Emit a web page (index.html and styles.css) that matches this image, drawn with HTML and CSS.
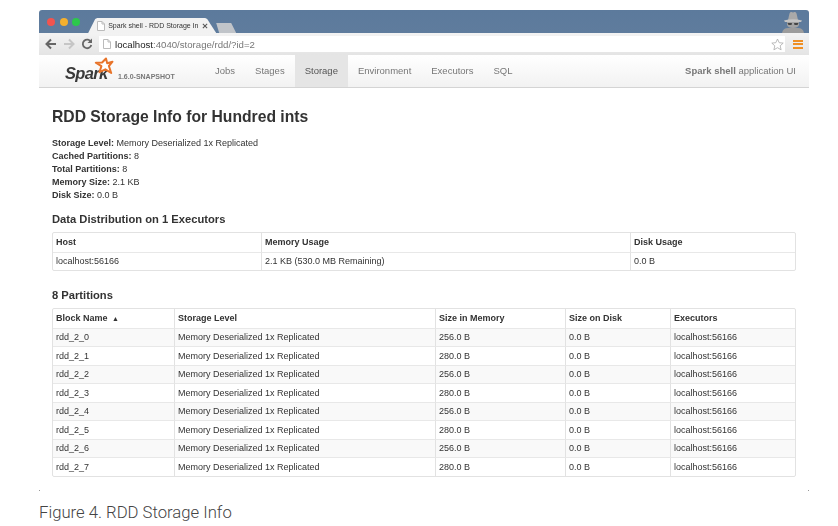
FILE: index.html
```html
<!DOCTYPE html>
<html lang="en">

<head>
  <meta charset="UTF-8">
  <title>RDD Storage Info</title>
  <link rel="stylesheet" href="styles.css">
</head>

<body>
  <div class="window">
    <div class="tabstrip">
      <div class="lights">
        <span class="light red"></span>
        <span class="light yellow"></span>
        <span class="light green"></span>
      </div>
      <div class="tab">
        <svg class="page-icon" width="8" height="10" viewBox="0 0 8 10"><path d="M.5.5h4.500l2.500 2.500v6.500h-7z" fill="#fff" stroke="#bbb"/><path d="M5 .5v2.500h2.500" fill="none" stroke="#bbb"/></svg>
        <span class="tab-title">Spark shell - RDD Storage In</span>
        <svg class="tab-close" width="6" height="6" viewBox="0 0 7 7"><path d="M1 1l5 5M6 1l-5 5" fill="none" stroke="#555" stroke-width="1.200"/></svg>
      </div>
      <div class="tab-new"></div>
      <svg class="spy" width="24" height="22" viewBox="0 0 24 22">
        <path d="M7 9l1.500-6.500q.5-2 2-1.500l1.500.5 1.500-.5q1.500-.5 2 1.500l1.500 6.500z" fill="#a9a9a9"/>
        <path d="M3 9.500q9-2.500 18 0l-1 1.500h-16z" fill="#c4c4c4"/>
        <path d="M6 11h12v3q-1 3-6 3t-6-3z" fill="#a3a3a3"/>
        <path d="M6.500 12h4.500l-.5 2h-3zM13 12h4.500l-1 2h-3z" fill="#444"/>
        <path d="M1 22q1-5 6-5h10q5 0 6 5z" fill="#9c9c9c"/>
      </svg>
    </div>

    <div class="toolbar">
      <svg class="nav-icon" width="12" height="12" viewBox="0 0 12 12"><path d="M11 6H2M6 1.500L1.500 6 6 10.500" fill="none" stroke="#666" stroke-width="2"/></svg>
      <svg class="nav-icon" width="12" height="12" viewBox="0 0 12 12"><path d="M1 6h9M6 1.500L10.500 6 6 10.500" fill="none" stroke="#c6c6c6" stroke-width="2"/></svg>
      <svg class="nav-icon" width="12" height="12" viewBox="0 0 12 12"><path d="M10 4a4.300 4.300 0 1 0 .3 3" fill="none" stroke="#666" stroke-width="1.800"/><path d="M11 .5v4.500h-4.500z" fill="#666"/></svg>
      <div class="omnibox">
        <svg class="page-icon" width="8" height="10" viewBox="0 0 8 10"><path d="M.5.5h4.500l2.500 2.500v6.500h-7z" fill="#fff" stroke="#bbb"/><path d="M5 .5v2.500h2.500" fill="none" stroke="#bbb"/></svg>
        <span class="url"><span class="host">localhost</span>:4040/storage/rdd/?id=2</span>
        <svg class="star" width="13" height="13" viewBox="0 0 13 13"><path d="M6.500 1l1.700 3.700 4 .4-3 2.700.9 4-3.600-2.100-3.600 2.100.9-4-3-2.700 4-.4z" fill="#fff" stroke="#aaa" stroke-width=".8"/></svg>
      </div>
      <div class="menu-icon"><span></span><span></span><span></span></div>
    </div>

    <div class="navbar">
      <div class="brand">
        <span class="wordmark">Spark</span>
        <svg class="spark-star" width="20" height="19" viewBox="0 0 20 19"><path d="M12 1.500l1.200 4.700 5.300-1.500-3.600 4.300 2.300 7-5.800-3.700-5.900 2.900 1.900-6.100-5.600-3.400 6.300-.2z" fill="#fff" stroke="#e8742a" stroke-width="2" stroke-linejoin="round"/></svg>
        <span class="version">1.6.0-SNAPSHOT</span>
      </div>
      <ul class="nav-links">
        <li>Jobs</li>
        <li>Stages</li>
        <li class="active">Storage</li>
        <li>Environment</li>
        <li>Executors</li>
        <li>SQL</li>
      </ul>
      <p class="app-name"><strong>Spark shell</strong> application UI</p>
    </div>

    <div class="content">
      <h3>RDD Storage Info for Hundred ints</h3>
      <ul class="summary">
        <li><strong>Storage Level:</strong> Memory Deserialized 1x Replicated</li>
        <li><strong>Cached Partitions:</strong> 8</li>
        <li><strong>Total Partitions:</strong> 8</li>
        <li><strong>Memory Size:</strong> 2.1 KB</li>
        <li><strong>Disk Size:</strong> 0.0 B</li>
      </ul>

      <h4>Data Distribution on 1 Executors</h4>
      <table class="exec-table">
        <thead>
          <tr><th class="c-host">Host</th><th class="c-mem">Memory Usage</th><th>Disk Usage</th></tr>
        </thead>
        <tbody>
          <tr><td>localhost:56166</td><td>2.1 KB (530.0 MB Remaining)</td><td>0.0 B</td></tr>
        </tbody>
      </table>

      <h4 class="second">8 Partitions</h4>
      <table class="part-table">
        <thead>
          <tr>
            <th class="c-block">Block Name <span class="sort">▲</span></th>
            <th class="c-level">Storage Level</th>
            <th class="c-size">Size in Memory</th>
            <th class="c-disk">Size on Disk</th>
            <th>Executors</th>
          </tr>
        </thead>
        <tbody>
          <tr><td>rdd_2_0</td><td>Memory Deserialized 1x Replicated</td><td>256.0 B</td><td>0.0 B</td><td>localhost:56166</td></tr>
          <tr><td>rdd_2_1</td><td>Memory Deserialized 1x Replicated</td><td>280.0 B</td><td>0.0 B</td><td>localhost:56166</td></tr>
          <tr><td>rdd_2_2</td><td>Memory Deserialized 1x Replicated</td><td>256.0 B</td><td>0.0 B</td><td>localhost:56166</td></tr>
          <tr><td>rdd_2_3</td><td>Memory Deserialized 1x Replicated</td><td>280.0 B</td><td>0.0 B</td><td>localhost:56166</td></tr>
          <tr><td>rdd_2_4</td><td>Memory Deserialized 1x Replicated</td><td>256.0 B</td><td>0.0 B</td><td>localhost:56166</td></tr>
          <tr><td>rdd_2_5</td><td>Memory Deserialized 1x Replicated</td><td>280.0 B</td><td>0.0 B</td><td>localhost:56166</td></tr>
          <tr><td>rdd_2_6</td><td>Memory Deserialized 1x Replicated</td><td>256.0 B</td><td>0.0 B</td><td>localhost:56166</td></tr>
          <tr><td>rdd_2_7</td><td>Memory Deserialized 1x Replicated</td><td>280.0 B</td><td>0.0 B</td><td>localhost:56166</td></tr>
        </tbody>
      </table>
    </div>
  </div>

  <div class="corners"><span></span><span></span></div>
  <p class="caption">Figure 4. RDD Storage Info</p>
</body>

</html>
```

FILE: styles.css
```css
html,
body {
  height: 526px;
  overflow: hidden;
}

body {
  font-family: "Liberation Sans", Arial, sans-serif;
  background-color: #fff;
  color: #333;
  margin: 0;
  padding: 10px 29px 0 39px;
  box-sizing: border-box;
}

/* Browser chrome */
.window {
  width: 770px;
  background: #fff;
  filter: blur(0.3px);
}

.tabstrip {
  height: 23px;
  background: linear-gradient(#5c7a9c, #5f7c9d);
  border-radius: 3px 3px 0 0;
  box-sizing: border-box;
  display: flex;
  align-items: flex-end;
  padding-left: 8px;
}

.lights {
  display: flex;
  gap: 4.600px;
  align-self: center;
  margin-right: 8px;
}

.light {
  width: 8px;
  height: 8px;
  border-radius: 50%;
}

.red { background: #f2544f; }
.yellow { background: #f5b02e; }
.green { background: #2dc84b; }

.tab {
  width: 128px;
  height: 15px;
  background: #f2f2f2;
  clip-path: polygon(0 100%, 7px 1px, 9px 0, 117px 0, 119px 1px, 128px 100%);
  display: flex;
  align-items: center;
  gap: 3px;
  padding: 0 0 0 9px;
  box-sizing: border-box;
  font-size: 7px;
  color: #333;
  white-space: nowrap;
}

.tab-close {
  margin-left: 1px;
}

.tab-new {
  width: 20px;
  height: 10px;
  background: #c0c4c9;
  clip-path: polygon(0 0, 15px 0, 20px 100%, 3px 100%);
}

.spy {
  margin-left: auto;
  margin-right: 4px;
}

.toolbar {
  height: 22px;
  background: linear-gradient(#f3f3f3, #e4e4e4);
  display: flex;
  align-items: center;
  gap: 6px;
  padding: 0 6px;
  box-sizing: border-box;
}

.nav-icon {
  flex: none;
}

.omnibox {
  flex: 1;
  height: 16px;
  background: #fff;
  display: flex;
  align-items: center;
  gap: 4px;
  padding: 0 1px 0 4px;
  font-size: 9.650px;
  color: #777;
}

.host {
  color: #222;
}

.star {
  margin-left: auto;
}

.menu-icon {
  width: 10px;
  display: flex;
  flex-direction: column;
  gap: 1.500px;
  margin-left: 2px;
}

.menu-icon span {
  height: 2px;
  background: #ef8f24;
}

/* Spark navbar */
.navbar {
  height: 33px;
  background: linear-gradient(#fff, #f2f2f2);
  border-bottom: 1px solid #d4d4d4;
  box-sizing: border-box;
  display: flex;
  align-items: stretch;
  font-size: 9.500px;
  color: #777;
}

.brand {
  position: relative;
  width: 166px;
  flex: none;
}

.wordmark {
  position: absolute;
  left: 26px;
  top: 9px;
  font-size: 16.500px;
  font-weight: bold;
  font-style: italic;
  color: #3a3a3a;
  letter-spacing: -0.7px;
}

.spark-star {
  position: absolute;
  left: 55px;
  top: 2px;
}

.version {
  position: absolute;
  left: 79px;
  top: 18px;
  font-size: 7px;
  font-weight: bold;
  color: #777;
}

.nav-links {
  list-style: none;
  margin: 0;
  padding: 0;
  display: flex;
}

.nav-links li {
  padding: 0 10px;
  line-height: 32px;
  color: #777;
}

.nav-links .active {
  background: #e5e5e5;
  color: #555;
}

.app-name {
  margin: 0 13px 0 auto;
  line-height: 32px;
}

/* Page content */
.content {
  padding: 0 13px;
}

h3 {
  font-size: 15.700px;
  margin: 0;
  padding-top: 19px;
  line-height: 20px;
}

.summary {
  list-style: none;
  margin: 10px 0 0;
  padding: 0;
  font-size: 9px;
  line-height: 13px;
}

h4 {
  font-size: 11.200px;
  margin: 10px 0 0;
  line-height: 14px;
}

h4.second {
  margin-top: 17px;
}

table {
  width: 744px;
  border-collapse: separate;
  border-spacing: 0;
  border: 1px solid #e2e2e2;
  border-radius: 2px;
  table-layout: fixed;
  font-size: 9px;
  margin-top: 6px;
}

th,
td {
  padding: 0 3px;
  height: 18.500px;
  box-sizing: border-box;
  text-align: left;
  border-left: 1px solid #e2e2e2;
  border-top: 1px solid #e8e8e8;
  white-space: nowrap;
}

th:first-child,
td:first-child {
  border-left: none;
}

thead th {
  border-top: none;
  font-weight: bold;
}

.part-table tbody tr:nth-child(odd) {
  background: #f9f9f9;
}

.c-host { width: 208px; }
.c-mem { width: 369px; }
.c-block { width: 121px; }
.c-level { width: 261px; }
.c-size { width: 130px; }
.c-disk { width: 105px; }

.sort {
  font-size: 7px;
  margin-left: 2px;
}

/* Below the screenshot */
.corners {
  display: flex;
  justify-content: space-between;
  width: 770px;
  margin-top: 13px;
}

.corners span {
  width: 1px;
  height: 1px;
  background: #999;
}

.caption {
  margin: 12px 0 0;
  font-family: Roboto, "Liberation Sans", sans-serif;
  font-weight: 300;
  font-size: 16.700px;
  line-height: 20px;
  color: #444;
}
```
